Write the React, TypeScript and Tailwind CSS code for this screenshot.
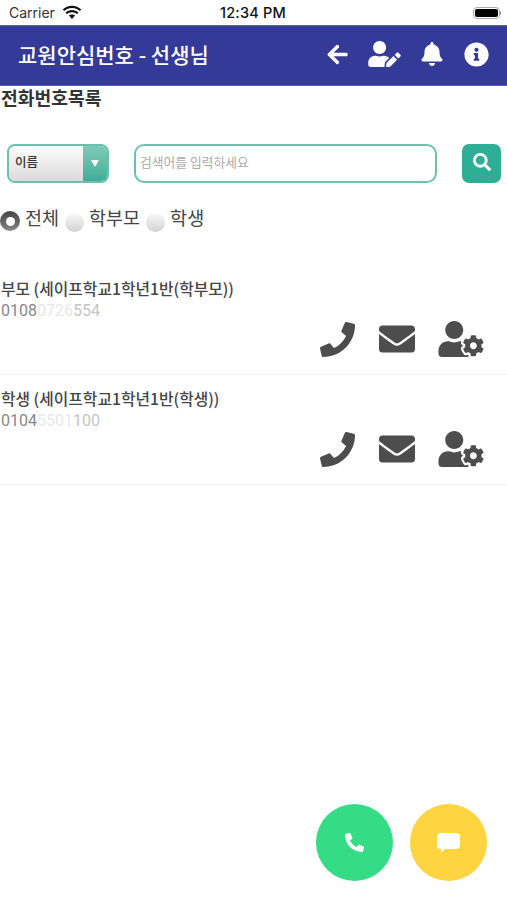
import { FaArrowLeft, FaBell, FaEnvelope, FaInfoCircle, FaPhone, FaPhoneAlt, FaSearch, FaUserCog, FaUserEdit } from "react-icons/fa"

const font = "font-['Noto_Sans_CJK_KR','Noto_Sans',sans-serif]"

interface Contact {
	name: string
	lead: string
	faded: string
	tail: string
}

const contacts: Contact[] = [
	{ name: "부모 (세이프학교1학년1반(학부모))", lead: "0108", faded: "0726", tail: "554" },
	{ name: "학생 (세이프학교1학년1반(학생))", lead: "0104", faded: "5501", tail: "100" },
]

function WifiIcon() {
	return (
		<svg width="20" height="15" viewBox="0 0 20 15" fill="#111">
			<path d="M10 3c3 0 5.800 1.200 7.800 3.100l1.500-1.600C16.900 2.200 13.600.7 10 .7S3.100 2.200.7 4.500l1.500 1.600C4.200 4.200 7 3 10 3z" />
			<path d="M10 7.300c1.900 0 3.600.7 5 1.900l1.500-1.600C14.800 6 12.500 5 10 5S5.200 6 3.500 7.600L5 9.200c1.400-1.200 3.100-1.900 5-1.900z" />
			<path d="M10 9.400c-1.200 0-2.300.5-3.100 1.200L10 14l3.100-3.400c-.8-.7-1.900-1.200-3.100-1.200z" />
		</svg>
	)
}

function StatusBar() {
	return (
		<div className="relative flex h-[25px] items-center justify-between pl-[9px] pr-[6px] font-['Inter',sans-serif] text-[14px] text-[#222]">
			<div className="flex items-center gap-[7px]">
				<span className="text-[#333]">Carrier</span>
				<WifiIcon />
			</div>
			<span className="absolute left-[220px] text-[14.500px] font-medium tracking-[0.2px] text-[#111]">12:34 PM</span>
			<div className="flex items-center">
				<div className="h-[12px] w-[27px] rounded-[4px] border border-[#aaa] bg-black bg-clip-content p-[1px]" />
				<div className="h-[4px] w-[1.500px] rounded-r-sm bg-[#999]" />
			</div>
		</div>
	)
}

function Header() {
	return (
		<div className="flex h-[61px] items-center justify-between border-y border-y-[#5a60b4] bg-[#343a98] pb-[3px] pl-[18px] pr-[18px] text-white">
			<span className={`${font} text-[21px] font-medium leading-none`}>교원안심번호 - 선생님</span>
			<div className="flex items-center">
				<FaArrowLeft className="mr-[19px] text-[23px]" />
				<FaUserEdit className="mr-[19px] w-[33px] text-[26px]" />
				<FaBell className="mr-[20px] text-[24px]" />
				<FaInfoCircle className="text-[25px]" />
			</div>
		</div>
	)
}

function SearchRow() {
	return (
		<div className="mt-[36px] flex items-center pl-[7px] pr-[6px]">
			<div className="flex h-[39px] w-[102px] overflow-hidden rounded-[8px] border-2 border-[#6cc1ae]">
				<div className={`${font} flex flex-1 items-center bg-gradient-to-b from-[#fdfdfd] via-[#ececec] to-[#dadada] pl-[6px] pb-[3px] text-[12.500px] font-medium text-[#333]`}>
					이름
				</div>
				<div className="flex w-[24px] items-center justify-center bg-gradient-to-b from-[#7ecbb8] to-[#3fae96]">
					<div className="h-0 w-0 border-x-[4px] border-t-[7px] border-x-transparent border-t-white" />
				</div>
			</div>
			<div className={`${font} ml-[25px] flex h-[39px] w-[303px] items-center rounded-[10px] border-2 border-[#6cc1ae] pl-[4px] pb-[3px] text-[12.800px] text-[#aaa]`}>
				검색어를 입력하세요
			</div>
			<div className="ml-auto flex h-[39px] w-[39px] items-center justify-center rounded-[7px] bg-[#2fae96]">
				<FaSearch className="mb-[3px] text-[18px] text-white" />
			</div>
		</div>
	)
}

function Radio({ checked, label }: { checked?: boolean; label: string }) {
	return (
		<div className="flex items-center">
			{checked ? (
				<div className="mt-[3px] flex h-[20px] w-[20px] items-center justify-center rounded-full bg-gradient-to-b from-[#444] to-[#888]">
					<div className="h-[9px] w-[9px] rounded-full bg-white" />
				</div>
			) : (
				<div className="mt-[6px] h-[19px] w-[19px] rounded-full bg-gradient-to-b from-[#fafafa] to-[#d2d2d2]" />
			)}
			<span className={`${font} ml-[5px] mb-[4px] text-[18.500px] leading-none text-[#444]`}>{label}</span>
		</div>
	)
}

function ContactRow({ contact }: { contact: Contact }) {
	return (
		<div className="h-[110px] border-b border-[#efefef] pl-[1px] pr-[23px] pt-[13px]">
			<div className={`${font} text-[15.800px] font-medium leading-[22px] text-[#444]`}>{contact.name}</div>
			<div className="font-['Roboto',sans-serif] text-[16px] leading-[22px] text-[#888]">
				{contact.lead}
				<span className="text-[#e8e8e8]">{contact.faded}</span>
				<span className="text-[#c4c4c4]">{contact.tail}</span>
			</div>
			<div className="-mt-[1px] flex items-center justify-end text-[#4d4d4d]">
				<FaPhone className="text-[35px]" />
				<FaEnvelope className="ml-[24px] text-[36px]" />
				<FaUserCog className="ml-[23px] w-[46px] text-[36px]" />
			</div>
		</div>
	)
}

export default function App() {
	return (
		<div className="relative h-[900px] w-[507px] overflow-hidden bg-white">
			<StatusBar />
			<Header />
			<div className={`${font} pl-[1px] text-[18.200px] font-bold leading-[22px] text-[#333]`}>전화번호목록</div>
			<SearchRow />
			<div className="mt-[24px] flex items-center gap-[6px]">
				<Radio checked label="전체" />
				<Radio label="학부모" />
				<Radio label="학생" />
			</div>
			<div className="mt-[33px]">
				{contacts.map((contact) => (
					<ContactRow key={contact.name} contact={contact} />
				))}
			</div>
			<div className="absolute left-[316px] top-[804px] flex h-[77px] w-[77px] items-center justify-center rounded-full bg-[#34dc85]">
				<FaPhoneAlt className="text-[19px] text-white" />
			</div>
			<div className="absolute left-[410px] top-[804px] flex h-[77px] w-[77px] items-center justify-center rounded-full bg-[#fed440]">
				<div className="relative mb-[4px] h-[16px] w-[23px] rounded-[4px] bg-white">
					<div className="absolute left-[4px] top-[15px] h-0 w-0 border-r-[5px] border-t-[5px] border-r-transparent border-t-white" />
				</div>
			</div>
		</div>
	)
}
